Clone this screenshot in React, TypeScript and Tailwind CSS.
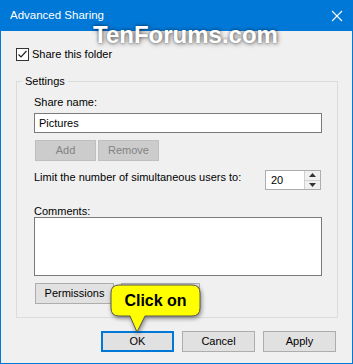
import React from "react";

const font = { fontFamily: '"Liberation Sans", Arial, sans-serif' };

const Btn = ({ label, w, disabled, focused }: { label: string; w: string; disabled?: boolean; focused?: boolean }) => (
    <div
        className={`${w} h-[21px] flex items-center justify-center text-[11px] leading-[15px] ${
            disabled
                ? "bg-[#cccccc] border border-[#bfbfbf] text-[#838383]"
                : focused
                ? "bg-[#e1e1e1] border-2 border-[#0078d7] text-black"
                : "bg-[#e1e1e1] border border-[#adadad] text-black"
        }`}
    >
        {label}
    </div>
);

const App = () => {
    return (
        <div className="relative w-[353px] h-[364px] bg-[#0078d7] flex flex-col overflow-hidden" style={font}>
            {/* Title bar */}
            <div className="h-[31px] flex items-center justify-between pl-[10px] pr-[10px] text-white text-[11.5px]">
                <span>Advanced Sharing</span>
                <svg width="12" height="12" viewBox="0 0 12 12">
                    <path d="M1 1 L11 11 M11 1 L1 11" stroke="white" strokeWidth="1.1" />
                </svg>
            </div>

            {/* Body */}
            <div className="flex-1 bg-[#f0f0f0] mx-px mb-px text-black text-[11px]">
                {/* Share checkbox */}
                <div className="flex items-center gap-[3px] pt-[16px] pl-[15px]">
                    <div className="w-[13px] h-[13px] border border-[#333333] bg-white flex items-center justify-center">
                        <svg width="11" height="11" viewBox="0 0 11 11">
                            <path d="M1.5 5.5 L4 8 L9.5 2" fill="none" stroke="#222" strokeWidth="1.2" />
                        </svg>
                    </div>
                    <span className="leading-[15px]">Share this folder</span>
                </div>

                {/* Settings group */}
                <div className="mt-[19px] ml-[15px] w-[322px] h-[237px] border border-[#dcdcdc]">
                    <div className="-mt-[8px] ml-[5px] px-[3px] w-fit bg-[#f0f0f0] leading-[15px]">Settings</div>
                    <div className="pl-[17px]">
                        <div className="mt-[6px] leading-[15px]">Share name:</div>
                        <div className="mt-[3px] w-[288px] h-[20px] border border-[#7a7a7a] bg-white flex items-center pl-[4px]">
                            Pictures
                        </div>
                        <div className="mt-[7px] ml-px flex gap-[2px]">
                            <Btn label="Add" w="w-[61px]" disabled />
                            <Btn label="Remove" w="w-[61px]" disabled />
                        </div>
                        <div className="mt-[9px] w-[288px] flex justify-between items-start">
                            <span className="leading-[15px]">Limit the number of simultaneous users to:</span>
                            <div className="w-[56px] h-[20px] border border-[#adadad] bg-white flex mr-px">
                                <div className="flex-1 flex items-center pl-[5px]">20</div>
                                <div className="w-[16px] flex flex-col border-l border-[#d0d0d0]">
                                    <div className="flex-1 flex items-center justify-center bg-[#f0f0f0] border-b border-[#d0d0d0]">
                                        <svg width="7" height="4" viewBox="0 0 7 4"><path d="M0 4 L3.5 0 L7 4 Z" fill="#333" /></svg>
                                    </div>
                                    <div className="flex-1 flex items-center justify-center bg-[#f0f0f0]">
                                        <svg width="7" height="4" viewBox="0 0 7 4"><path d="M0 0 L3.5 4 L7 0 Z" fill="#333" /></svg>
                                    </div>
                                </div>
                            </div>
                        </div>
                        <div className="mt-[14px] leading-[15px]">Comments:</div>
                        <div className="-mt-[2px] w-[288px] h-[59px] border border-[#7a7a7a] bg-white"></div>
                        <div className="mt-[7px] ml-px flex gap-[7px]">
                            <Btn label="Permissions" w="w-[79px]" />
                            <Btn label="" w="w-[79px]" />
                        </div>
                    </div>
                </div>

                {/* Dialog buttons */}
                <div className="mt-[13px] pl-[100px] flex gap-[8px]">
                    <Btn label="OK" w="w-[73px]" focused />
                    <Btn label="Cancel" w="w-[73px]" />
                    <Btn label="Apply" w="w-[73px]" />
                </div>
            </div>

            {/* Watermark */}
            <div className="absolute left-[93px] top-[21px] text-[24px] leading-[28px] font-bold text-white [text-shadow:0_0_3px_rgba(0,0,0,0.5),1px_1px_5px_rgba(0,0,0,0.45)]">
                TenForums.com
            </div>

            {/* Callout */}
            <div className="absolute left-[108px] top-[282px] w-[98px] h-[56px]">
                <svg width="98" height="56" viewBox="0 0 98 56" className="absolute left-0 top-0 [filter:drop-shadow(1px_2px_2px_rgba(0,0,0,0.45))]">
                    <path
                        d="M11 3 H84 Q92 3 92 11 V26 Q92 34 84 34 H37 L29 50 L22 34 H11 Q3 34 3 26 V11 Q3 3 11 3 Z"
                        fill="#ffff00"
                        stroke="#555555"
                        strokeWidth="1"
                    />
                </svg>
                <div className="absolute left-[3px] top-[3px] w-[89px] h-[31px] flex items-center justify-center text-[16px] font-bold text-black">
                    Click on
                </div>
            </div>
        </div>
    );
};

export default App;
